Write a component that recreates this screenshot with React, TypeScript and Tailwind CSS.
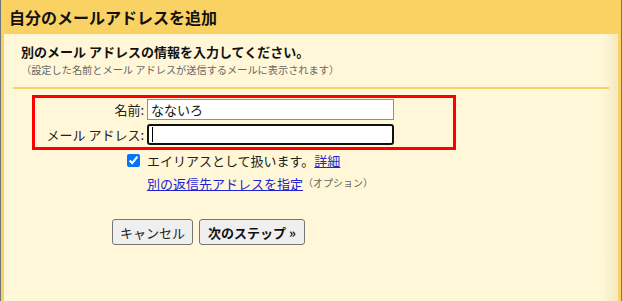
import React from 'react';

const font = { fontFamily: '"Noto Sans CJK JP", "Noto Sans", sans-serif' };

export default function App() {
  return (
    <div
      style={font}
      className="flex h-[301px] w-[622px] overflow-hidden bg-[#fad163] text-[#222]"
    >
      {/* outer page edge */}
      <div className="w-px bg-[#6f737b]" />

      <div className="flex flex-1 flex-col px-[3px]">
        <div className="flex h-[34px] items-center pl-[5px]">
          <h1 className="text-[16px] font-bold leading-none text-[#111]">
            自分のメールアドレスを追加
          </h1>
        </div>

        <div className="flex-1 bg-[linear-gradient(to_right,#fff7d7_97.5%,#f5e8c2)]">
          <div className="pl-[17px] pt-[10px]">
            <h2 className="text-[13px] font-bold leading-[16px] text-[#111]">
              別のメール アドレスの情報を入力してください。
            </h2>
            <p className="mt-[3px] text-[10.2px] leading-[14px] text-[#666]">
              （設定した名前とメール アドレスが送信するメールに表示されます）
            </p>
          </div>

          <div className="mx-[9px] mt-[10px] h-[2px] bg-[#fad163]" />

          {/* highlighted fields */}
          <div className="ml-[28px] mt-[6px] w-[424px] border-[3px] border-[#ff0000] pb-[2px] pt-[1px]">
            <div className="grid grid-cols-[109px_247px] items-center gap-x-[3px] gap-y-[4px]">
              <label className="text-right text-[13px] leading-none">名前:</label>
              <input
                defaultValue="なないろ"
                className="h-[21px] border border-[#8f8f8f] bg-white px-[3px] text-[13px] leading-none text-[#111] outline-none"
                style={font}
              />
              <label className="text-right text-[13px] leading-none">メール アドレス:</label>
              <div className="flex h-[21px] items-center rounded-[3px] border-2 border-[#111] bg-white pl-[3px]">
                <span className="h-[15px] w-px bg-black" />
              </div>
            </div>
          </div>

          <div className="ml-[123px] mt-[1px] flex h-[18px] items-center gap-[7px]">
            <input
              type="checkbox"
              defaultChecked
              className="m-0 h-[13px] w-[13px] accent-[#0075ff]"
            />
            <span className="text-[13px] leading-none">
              エイリアスとして扱います。
              <a href="#" className="text-[#2323d6] underline">
                詳細
              </a>
            </span>
          </div>

          <div className="ml-[143px] mt-[6px] flex h-[16px] items-center">
            <a href="#" className="text-[13px] leading-none text-[#2323d6] underline">
              別の返信先アドレスを指定
            </a>
            <span className="text-[10px] leading-none text-[#666]">（オプション）</span>
          </div>

          <div className="ml-[108px] mt-[28px] flex gap-[6px]">
            <button
              style={font}
              className="h-[26px] rounded-[3px] border border-[#767676] bg-[#efefef] px-[7px] text-[13px] leading-none text-[#222]"
            >
              キャンセル
            </button>
            <button
              style={font}
              className="h-[26px] rounded-[3px] border border-[#767676] bg-[#efefef] px-[8px] text-[13px] font-bold leading-none text-[#111]"
            >
              次のステップ »
            </button>
          </div>
        </div>
      </div>

      <div className="w-px bg-[#6f737b]" />
    </div>
  );
}
